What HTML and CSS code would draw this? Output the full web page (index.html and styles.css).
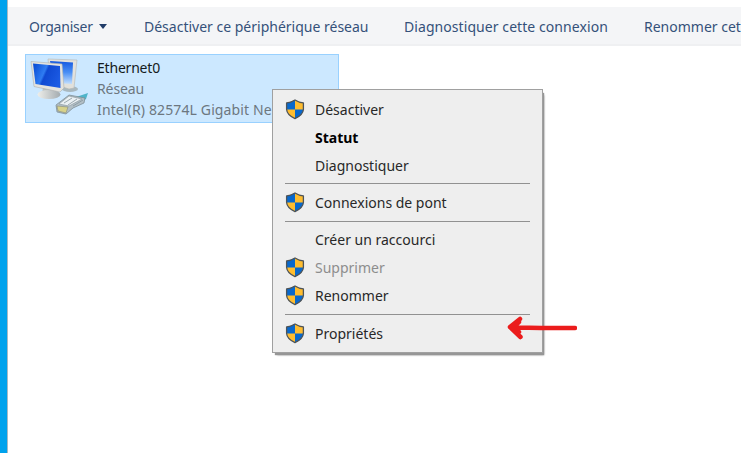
FILE: index.html
```
<!DOCTYPE html>
<html lang="fr">
<head>
<meta charset="utf-8">
<title>Connexions réseau</title>
<link rel="stylesheet" href="styles.css">
</head>
<body>
<svg width="0" height="0" class="defs" aria-hidden="true">
  <defs>
    <linearGradient id="screen" x1="0" y1="0.200" x2="1" y2=".6"><stop offset="0" stop-color="#0b4fd6"/><stop offset=".4" stop-color="#2f7cf2"/><stop offset=".48" stop-color="#0f49d2"/><stop offset="1" stop-color="#1c5be4"/></linearGradient>
    <linearGradient id="back" x1="0" y1="0" x2="0" y2="1"><stop offset="0" stop-color="#1458e0"/><stop offset=".5" stop-color="#4a8ff5"/><stop offset="1" stop-color="#c3dffd"/></linearGradient>
    <linearGradient id="stand" x1="0" x2="1"><stop offset="0" stop-color="#eeeeea"/><stop offset="1" stop-color="#a3abaf"/></linearGradient>
    <symbol id="shield" viewBox="0 0 20 21">
      <path fill="#ffbd2f" d="M10 1 18.4 4.2V10.5Q18 16 10 19.6 2 16 1.6 10.5V4.2Z"/>
      <path fill="#0868cd" d="M10 1V10.4H1.6V4.2ZM10 10.4H18.4Q18 16 10 19.6Z"/>
      <path fill="none" stroke="#4e5458" stroke-width="1.3" stroke-linejoin="round" d="M10 1Q14 3.6 18.4 3.8V10.5Q18 16 10 19.6 2 16 1.6 10.5V3.8Q6 3.6 10 1Z"/>
    </symbol>
  </defs>
</svg>
<div class="window">
  <nav class="toolbar">
    <span class="t1">Organiser</span><i class="caret"></i>
    <span class="t2">Désactiver ce périphérique réseau</span>
    <span class="t3">Diagnostiquer cette connexion</span>
    <span class="t4">Renommer cet</span>
  </nav>
  <main class="content">
    <article class="adapter">
      <svg class="network" viewBox="0 0 62 60" width="62" height="60">
        <ellipse cx="43" cy="34" rx="8" ry="3" fill="#a9b8bf"/>
        <path fill="#e2e1dc" stroke="#b4b7b5" stroke-width=".6" d="M21 4 50 5 47 33 42 34 23 28Z"/>
        <path fill="url(#back)" d="M23 6 46 7.5 45 29 27 28Z"/>
        <path fill="#bcc1c1" d="M16 32H27L28 39H15Z"/>
        <ellipse cx="22" cy="39.500" rx="11.500" ry="4.500" fill="url(#stand)"/>
        <path fill="#e4e3de" stroke="#acb0b0" stroke-width=".6" d="M4 6.500 35 9 37 33 33 37 7 31.500Z"/>
        <path fill="url(#screen)" d="M6 8.500 33 11 33.500 33 8.500 29Z"/>
        <path fill="#4fb4c9" d="M49 42 61 38 59 44 52 48Z"/>
        <path fill="#b2bfc6" stroke="#77868e" stroke-width=".7" d="M29 50 42 40 58 43 57 48 46 53 39 59 30 57Z"/>
        <path fill="#eaf0f3" stroke="#87939b" stroke-width=".6" d="m32 49 10-8 13 3-13 7Z"/>
        <path fill="#d7d28b" stroke="#85897d" stroke-width=".6" d="m30 51 11 1-2 6-8-2Z"/>
        <path stroke="#85949c" stroke-width=".8" d="m37 48 8-5M41 50l9-6M46 51l10-6"/>
      </svg>
      <div class="details">
        <div class="name">Ethernet0</div>
        <div class="net">Réseau</div>
        <div class="device">Intel(R) 82574L Gigabit Ne</div>
      </div>
    </article>
  </main>
</div>
<div class="menu">
  <div class="item"><svg><use href="#shield"/></svg><span>Désactiver</span></div>
  <div class="item bold"><span>Statut</span></div>
  <div class="item"><span>Diagnostiquer</span></div>
  <hr>
  <div class="item"><svg><use href="#shield"/></svg><span>Connexions de pont</span></div>
  <hr>
  <div class="item"><span>Créer un raccourci</span></div>
  <div class="item disabled"><svg><use href="#shield"/></svg><span>Supprimer</span></div>
  <div class="item"><svg><use href="#shield"/></svg><span>Renommer</span></div>
  <hr>
  <div class="item"><svg><use href="#shield"/></svg><span>Propriétés</span></div>
</div>
<svg class="arrow" width="76" height="34" viewBox="0 0 76 34"><path fill="none" stroke="#eb1c1c" stroke-width="4.500" stroke-linecap="round" stroke-linejoin="round" d="M74 18C56 18 31 18.500 9 17M19 9 9 17 19.500 27M18 12 13 16.500 18 22"/></svg>
</body>
</html>
```
FILE: styles.css
```
* { box-sizing: border-box; }
body { margin: 0; width: 741px; height: 453px; overflow: hidden; background: #fff; font: 14px/20px "Noto Sans", sans-serif; }
.defs { position: absolute; }
.window { height: 453px; border-left: 7px solid #00a2ed; padding-top: 7px; box-shadow: inset 1px 0 #a9b9c2; }
.toolbar { display: flex; align-items: center; height: 39px; margin-left: 1px; padding: 2px 0 0 21px; background: #f4f5f7; border-bottom: 2px solid #eff0f2; color: #35517a; white-space: nowrap; overflow: hidden; }
.toolbar span { flex: none; }
.t1 { width: 67px; letter-spacing: -.2px; }
.t2 { width: 224px; margin-left: 37px; }
.t3 { width: 204px; margin-left: 36px; letter-spacing: .07px; }
.t4 { margin-left: 36px; }
.caret { margin-left: 3px; border: 4px solid transparent; border-top: 5px solid #203c68; border-bottom: 0; }
.content { padding: 8px 0 0 18px; }
.adapter { display: flex; width: 314px; height: 69px; background: #cce8ff; border: 1px solid #99d1ff; }
.network { flex: none; margin-left: 1px; }
.details { width: 176px; margin-left: 8px; padding-top: 2px; line-height: 21px; color: #6c7780; white-space: nowrap; overflow: hidden; }
.name { color: #151b20; letter-spacing: -.2px; }
.net { letter-spacing: -.1px; }
.device { letter-spacing: .13px; }
.menu { position: absolute; left: 272px; top: 89px; width: 271px; height: 264px; padding: 6px 12px 4px; background: #eee; border: 1px solid #a0a0a0; box-shadow: 2px 3px 1px -1px #969696, 3px 4px 2px -2px #969696; color: #282828; }
.item { display: flex; align-items: center; height: 28px; padding-left: 30px; white-space: nowrap; }
.item svg { width: 20px; height: 21px; margin: -1px 10px 0 -30px; }
.bold { font-weight: bold; color: #000; }
.disabled { color: #8d8d8d; }
hr { height: 9.2px; width: 245px; margin: 0; border: 0; background: linear-gradient(#919191, #919191) 0 3.4px / 100% 1px no-repeat; }
.arrow { position: absolute; left: 501px; top: 310px; }
```
